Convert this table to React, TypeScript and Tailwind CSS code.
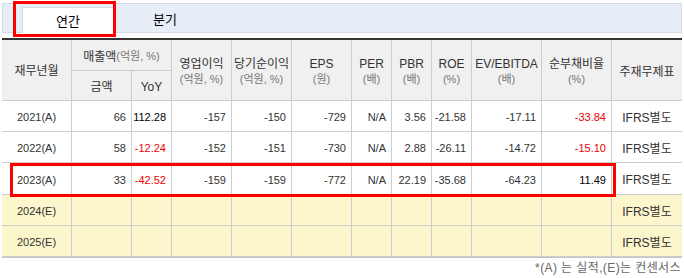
import React from "react";

const FONT = { fontFamily: '"Liberation Sans", "Noto Sans CJK KR", sans-serif' };

type Row = { y: string; v: string[]; est?: boolean };

const rows: Row[] = [
  { y: "2021(A)", v: ["66", "112.28", "-157", "-150", "-729", "N/A", "3.56", "-21.58", "-17.11", "-33.84"] },
  { y: "2022(A)", v: ["58", "-12.24", "-152", "-151", "-730", "N/A", "2.88", "-26.11", "-14.72", "-15.10"] },
  { y: "2023(A)", v: ["33", "-42.52", "-159", "-159", "-772", "N/A", "22.19", "-35.68", "-64.23", "11.49"] },
  { y: "2024(E)", v: ["", "", "", "", "", "", "", "", "", ""], est: true },
  { y: "2025(E)", v: ["", "", "", "", "", "", "", "", "", ""], est: true },
];

const RED = new Set(["-12.24", "-42.52", "-33.84", "-15.10"]);
const BLACK = new Set(["112.28", "11.49"]);

function H({ main, sub, className = "" }: { main: string; sub?: string; className?: string }) {
  return (
    <div
      className={`flex flex-col items-center justify-center border-b border-r border-[#cdcdcd] bg-[#f0f0f0] pt-[3px] text-[12px] leading-[15px] text-[#333] ${className}`}
    >
      <span>{main}</span>
      {sub && <span className="text-[11px] text-[#777]">{sub}</span>}
    </div>
  );
}

export default function App() {
  return (
    <div className="relative h-[278px] w-[684px] overflow-hidden bg-white" style={FONT}>
      {/* Tabs */}
      <div className="px-[2px] pt-[3px]">
        <div className="flex h-[30px] w-[680px] items-end border border-[#d3dbe7] bg-[#e8eef8] pl-[19px]">
          <div className="relative z-10 -mb-px flex h-[26px] w-[91px] items-center justify-center border-l border-t border-[#d3dbe7] bg-white pt-[2px] text-[13px] text-black">
            연간
          </div>
          <div className="flex h-[26px] w-[104px] items-center justify-center pt-[2px] text-[13px] text-black">
            분기
          </div>
        </div>
      </div>

      {/* Table */}
      <div className="mx-[2px] mt-[5px] w-[680px] border-t-2 border-b border-t-[#333] border-b-[#c4c4c4]">
        <div className="grid grid-cols-[70px_60px_40px_60px_60px_60px_40px_40px_40px_70px_70px_70px] grid-rows-[31px_30px_31px_31px_32px_31px_31px]">
          <H main="재무년월" className="row-span-2" />
          <div className="col-span-2 flex items-center justify-center border-b border-r border-[#cdcdcd] bg-[#f0f0f0] pt-[3px] text-[12px] text-[#333]">
            매출액<span className="text-[11px] text-[#777]">(억원, %)</span>
          </div>
          <H main="영업이익" sub="(억원, %)" className="row-span-2" />
          <H main="당기순이익" sub="(억원, %)" className="row-span-2" />
          <H main="EPS" sub="(원)" className="row-span-2" />
          <H main="PER" sub="(배)" className="row-span-2" />
          <H main="PBR" sub="(배)" className="row-span-2" />
          <H main="ROE" sub="(%)" className="row-span-2" />
          <H main="EV/EBITDA" sub="(배)" className="row-span-2" />
          <H main="순부채비율" sub="(%)" className="row-span-2" />
          <div className="row-span-2 flex items-center justify-center border-b border-[#cdcdcd] bg-[#f0f0f0] pt-[3px] text-[12px] text-[#333]">
            주재무제표
          </div>
          <H main="금액" />
          <H main="YoY" />

          {rows.map((r) => (
            <React.Fragment key={r.y}>
              <div
                className={`flex items-center justify-center border-b border-r border-[#cdcdcd] pt-[3px] text-[11px] text-[#333] ${r.est ? "bg-[#fcf6cd]" : "bg-white"}`}
              >
                {r.y}
              </div>
              {r.v.map((val, i) => (
                <div
                  key={i}
                  className={`flex items-center justify-end border-b border-r border-[#cdcdcd] pr-[5px] pt-[3px] text-[11px] ${r.est ? "bg-[#fcf6cd]" : "bg-white"} ${RED.has(val) ? "text-[#ee0000]" : BLACK.has(val) ? "text-black" : "text-[#333]"}`}
                >
                  {val}
                </div>
              ))}
              <div
                className={`flex items-center justify-center border-b border-[#cdcdcd] pt-[3px] text-[12px] text-[#333] ${r.est ? "bg-[#fcf6cd]" : "bg-white"}`}
              >
                IFRS별도
              </div>
            </React.Fragment>
          ))}
        </div>
      </div>

      {/* Footer */}
      <div className="mt-[3px] pr-[3px] text-right text-[12px] leading-[14px] tracking-[0.4px] text-[#666]">
        *(A) 는 실적,(E)는 컨센서스
      </div>

      {/* Annotation boxes */}
      <div className="pointer-events-none absolute left-[13px] top-[1px] h-[36px] w-[103px] border-[3px] border-[#ff0000]" />
      <div className="pointer-events-none absolute left-[10px] top-[163px] h-[34px] w-[606px] border-[3px] border-[#ff0000]" />
    </div>
  );
}
